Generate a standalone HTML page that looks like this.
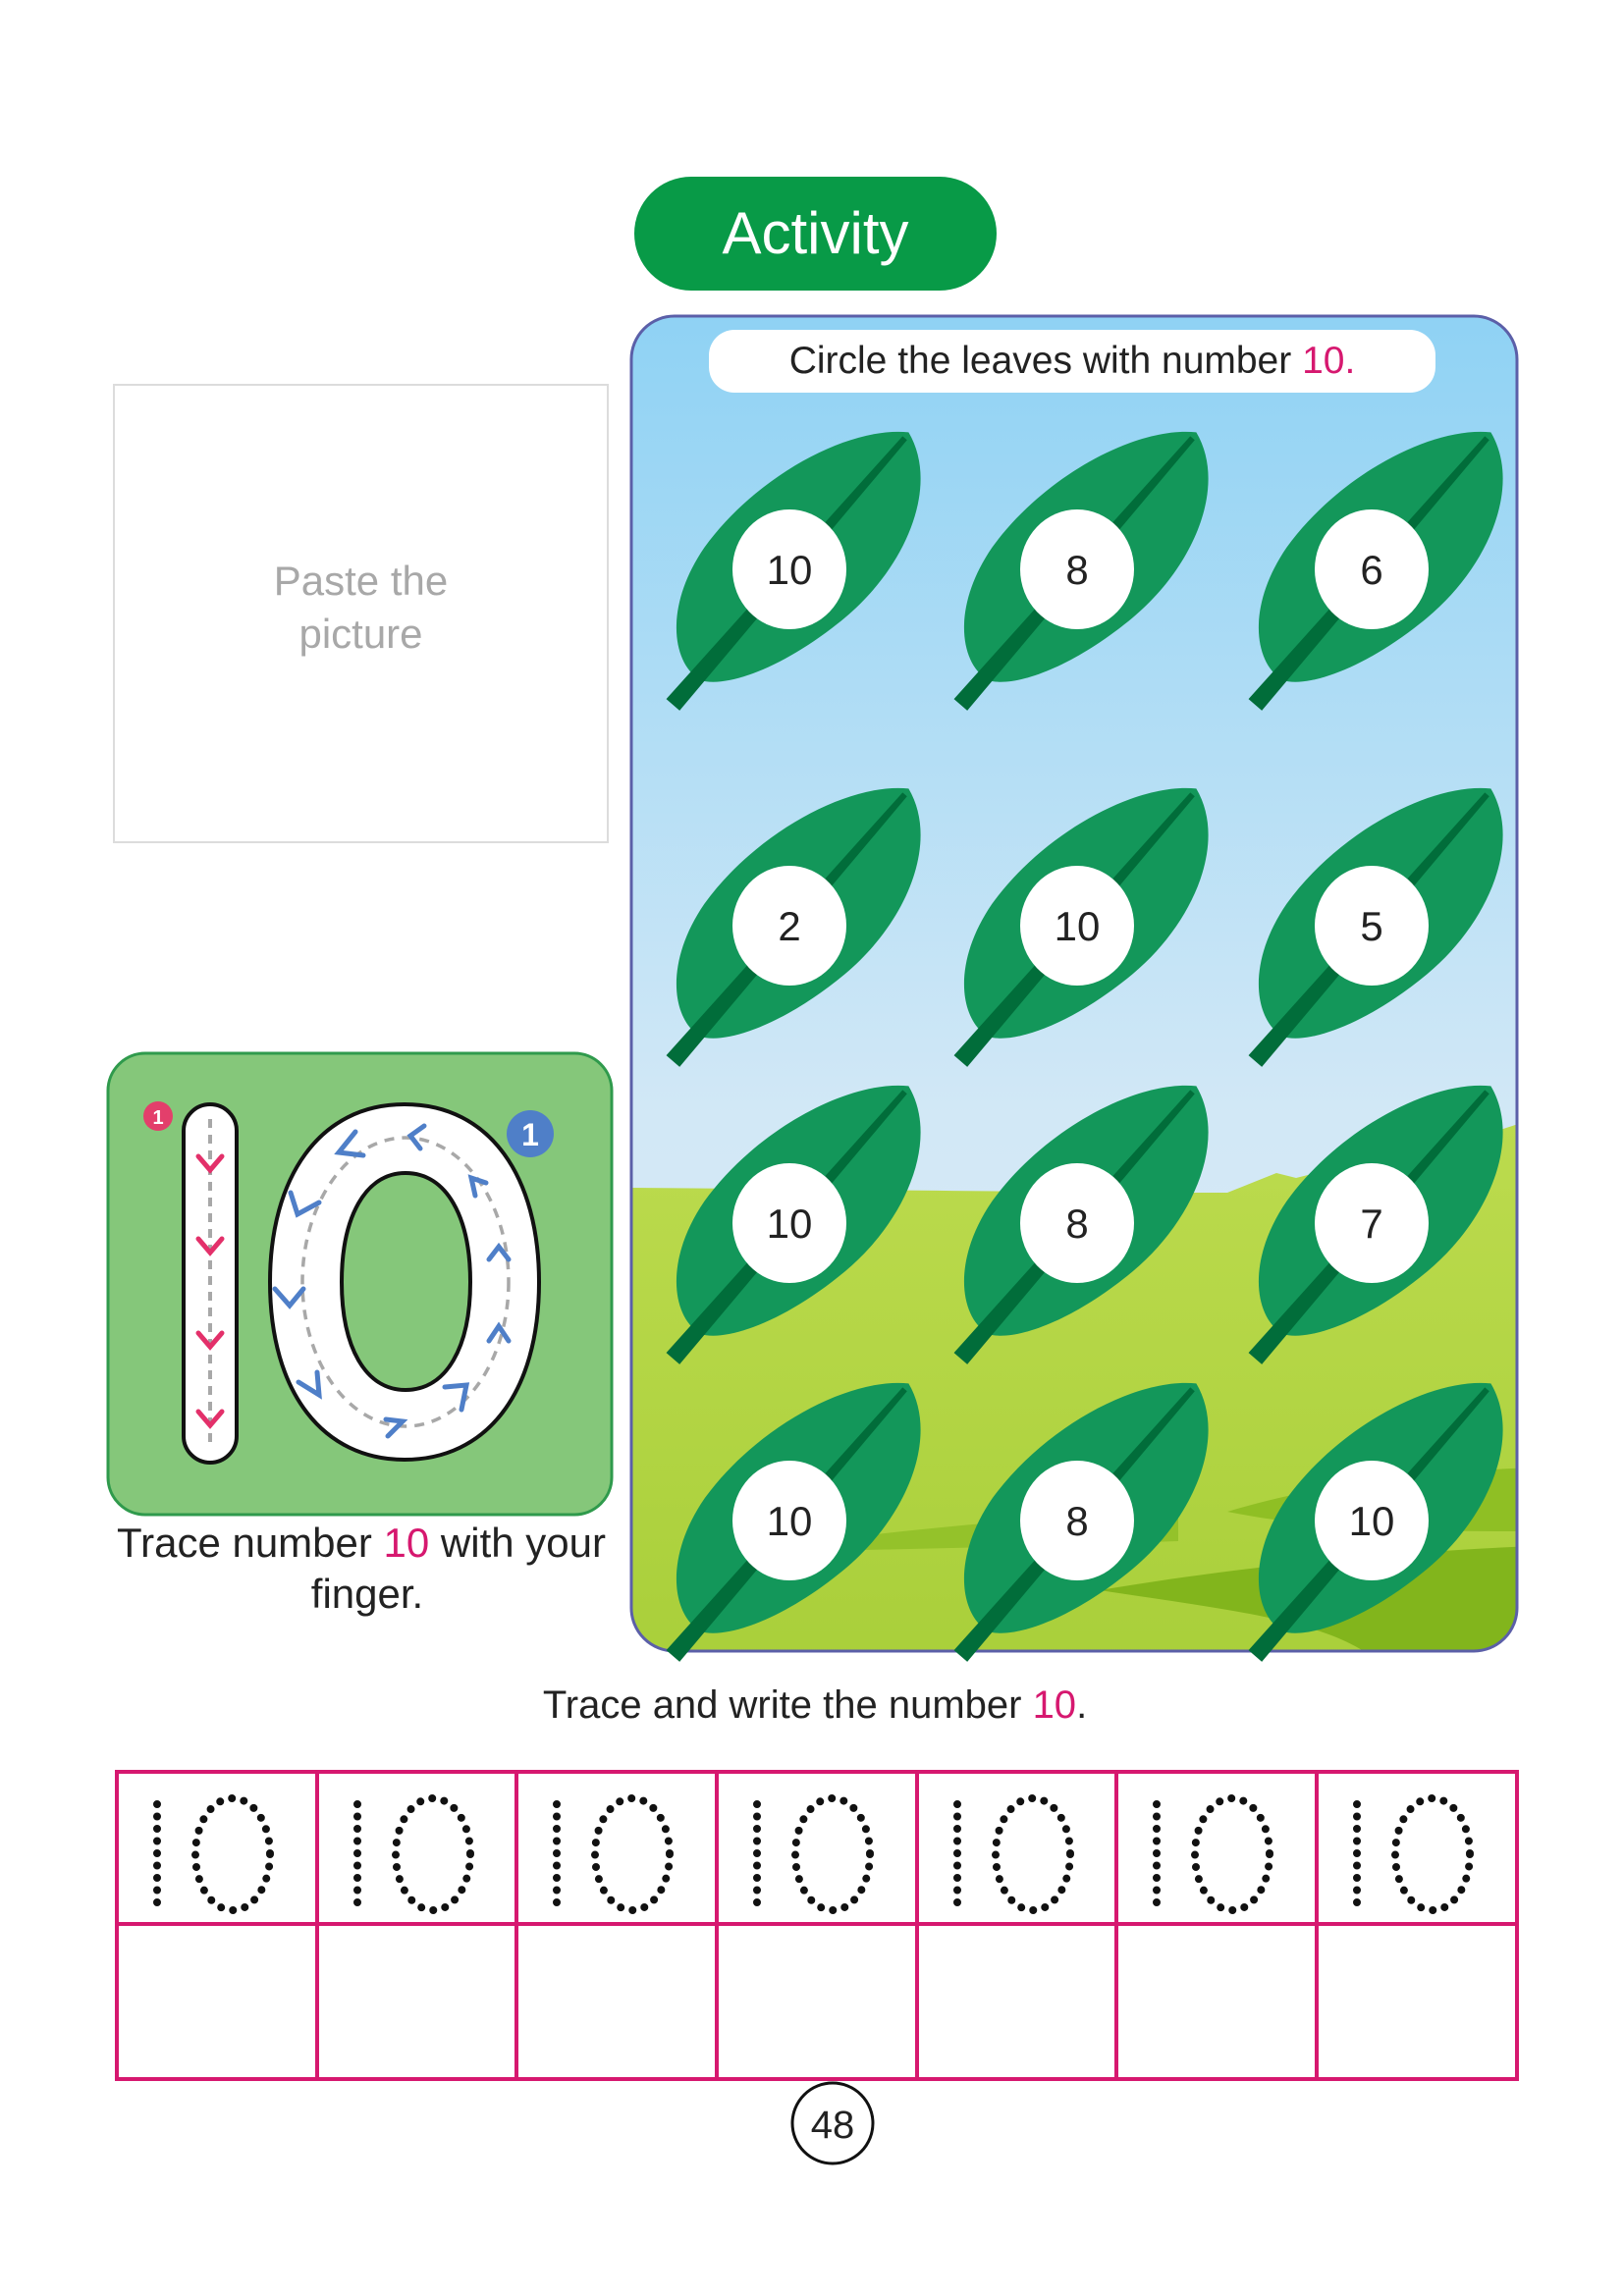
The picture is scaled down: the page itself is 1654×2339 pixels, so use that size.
<!DOCTYPE html>
<html><head><meta charset="utf-8"><style>
html,body{margin:0;padding:0;background:#fff;}
body{width:1654px;height:2339px;position:relative;overflow:hidden;font-family:"Liberation Sans",sans-serif;color:#222;}
.abs{position:absolute;}
</style></head><body>
<div class="abs" style="left:646px;top:180px;width:369px;height:116px;border-radius:58px;background:#089a47;color:#fff;font-size:60px;line-height:116px;text-align:center;">Activity</div>

<div class="abs" style="left:115px;top:391px;width:501px;height:464px;border:2px solid #dcdcdc;"></div>
<div class="abs" style="left:115px;top:565px;width:505px;text-align:center;color:#a8a8a8;font-size:42px;line-height:54px;">Paste the<br>picture</div>

<svg class="abs" style="left:0;top:0" width="1654" height="2339" viewBox="0 0 1654 2339">
<defs>
<linearGradient id="sky" x1="0" y1="0" x2="0" y2="1">
<stop offset="0" stop-color="#8fd2f4"/><stop offset="0.6" stop-color="#d2e8f6"/><stop offset="1" stop-color="#dcecf6"/>
</linearGradient>
<linearGradient id="grass" x1="0" y1="0" x2="0" y2="1">
<stop offset="0" stop-color="#bcdb4e"/><stop offset="1" stop-color="#a9cf3a"/>
</linearGradient>
<clipPath id="pc"><rect x="643" y="322" width="902" height="1360" rx="44"/></clipPath>
<g id="leaf">
<path d="M0,-185 C60,-165 88,-80 75,0 C62,80 30,135 5,145 C-30,150 -72,110 -80,40 C-88,-50 -50,-150 0,-185Z" fill="#13975a"/>
<path d="M-2,-178 L4,-178 L10,182 L-8,182Z" fill="#016d3a"/>
</g>
</defs>
<rect x="643" y="322" width="902" height="1360" rx="44" fill="url(#sky)"/>
<g clip-path="url(#pc)">
<path d="M640,1210 C900,1212 1100,1215 1250,1215 L1300,1195 L1320,1200 L1400,1180 C1470,1168 1520,1155 1560,1140 L1560,1700 L640,1700Z" fill="url(#grass)"/>
<path d="M1250,1540 C1350,1510 1450,1500 1560,1495 L1560,1560 C1450,1560 1350,1560 1250,1540Z" fill="#8fbf24"/>
<path d="M1120,1620 C1300,1590 1450,1580 1560,1575 L1560,1690 L1400,1690 C1350,1650 1250,1640 1120,1620Z" fill="#82b51c"/>
<path d="M760,1580 C900,1560 1050,1545 1200,1540 L1200,1570 C1050,1575 900,1580 760,1580Z" fill="#94c22a"/>
</g>
<rect x="643" y="322" width="902" height="1360" rx="44" fill="none" stroke="#5b5fa8" stroke-width="3"/>
<rect x="722" y="336" width="740" height="64" rx="26" fill="#fff"/>
<text x="1092" y="380" text-anchor="middle" font-family="Liberation Sans, sans-serif" font-size="39" fill="#222">Circle the leaves with number <tspan fill="#d6186f">10.</tspan></text>

<g font-family="Liberation Sans, sans-serif" font-size="42" text-anchor="middle" fill="#222">
<g transform="translate(804,580)"><use href="#leaf" transform="rotate(41)"/><ellipse rx="58" ry="61" fill="#fff"/><text y="15">10</text></g>
<g transform="translate(1097,580)"><use href="#leaf" transform="rotate(41)"/><ellipse rx="58" ry="61" fill="#fff"/><text y="15">8</text></g>
<g transform="translate(1397,580)"><use href="#leaf" transform="rotate(41)"/><ellipse rx="58" ry="61" fill="#fff"/><text y="15">6</text></g>
<g transform="translate(804,943)"><use href="#leaf" transform="rotate(41)"/><ellipse rx="58" ry="61" fill="#fff"/><text y="15">2</text></g>
<g transform="translate(1097,943)"><use href="#leaf" transform="rotate(41)"/><ellipse rx="58" ry="61" fill="#fff"/><text y="15">10</text></g>
<g transform="translate(1397,943)"><use href="#leaf" transform="rotate(41)"/><ellipse rx="58" ry="61" fill="#fff"/><text y="15">5</text></g>
<g transform="translate(804,1246)"><use href="#leaf" transform="rotate(41)"/><ellipse rx="58" ry="61" fill="#fff"/><text y="15">10</text></g>
<g transform="translate(1097,1246)"><use href="#leaf" transform="rotate(41)"/><ellipse rx="58" ry="61" fill="#fff"/><text y="15">8</text></g>
<g transform="translate(1397,1246)"><use href="#leaf" transform="rotate(41)"/><ellipse rx="58" ry="61" fill="#fff"/><text y="15">7</text></g>
<g transform="translate(804,1549)"><use href="#leaf" transform="rotate(41)"/><ellipse rx="58" ry="61" fill="#fff"/><text y="15">10</text></g>
<g transform="translate(1097,1549)"><use href="#leaf" transform="rotate(41)"/><ellipse rx="58" ry="61" fill="#fff"/><text y="15">8</text></g>
<g transform="translate(1397,1549)"><use href="#leaf" transform="rotate(41)"/><ellipse rx="58" ry="61" fill="#fff"/><text y="15">10</text></g>
</g>

<rect x="110" y="1073" width="513" height="470" rx="38" fill="#85c77a" stroke="#2f9a4c" stroke-width="3"/>
<rect x="187" y="1125" width="54" height="365" rx="27" fill="#fff" stroke="#111" stroke-width="4"/>
<line x1="214" y1="1140" x2="214" y2="1475" stroke="#a8a8a8" stroke-width="4" stroke-dasharray="9 7"/>
<g fill="none" stroke="#e3306a" stroke-width="5" stroke-linecap="round">
<path d="M202,1178 L214,1192 L226,1178"/><path d="M202,1262 L214,1276 L226,1262"/><path d="M202,1358 L214,1372 L226,1358"/><path d="M202,1438 L214,1452 L226,1438"/>
</g>
<path fill-rule="evenodd" d="M412,1125 C500,1125 549,1200 549,1306 C549,1420 495,1487 412,1487 C330,1487 275,1420 275,1306 C275,1200 325,1125 412,1125Z M413,1195 C455,1195 479,1240 479,1306 C479,1372 455,1416 413,1416 C372,1416 348,1372 348,1306 C348,1240 372,1195 413,1195Z" fill="#fff" stroke="#111" stroke-width="4"/>
<ellipse cx="413" cy="1306" rx="105" ry="147" fill="none" stroke="#a8a8a8" stroke-width="3.5" stroke-dasharray="10 8"/>
<g fill="none" stroke="#4f7fc8" stroke-width="5" stroke-linecap="round">
<path d="M432,1147 L418,1157 L428,1170"/><path d="M362,1153 L345,1174 L370,1177"/><path d="M296,1215 L303,1237 L325,1225"/>
<path d="M280,1313 L295,1330 L309,1313"/><path d="M304,1408 L325,1421 L323,1398"/><path d="M393,1446 L410,1448 L395,1463"/>
<path d="M453,1413 L475,1411 L470,1436"/><path d="M495,1205 L480,1200 L484,1218"/><path d="M498,1283 L508,1270 L518,1283"/><path d="M498,1366 L508,1351 L518,1366"/>
</g>
<circle cx="161" cy="1137" r="15" fill="#e33f6b"/>
<text x="161" y="1145" text-anchor="middle" font-family="Liberation Sans, sans-serif" font-weight="bold" font-size="20" fill="#fff">1</text>
<circle cx="540" cy="1155" r="24" fill="#4f7fc8"/>
<text x="540" y="1167" text-anchor="middle" font-family="Liberation Sans, sans-serif" font-weight="bold" font-size="32" fill="#fff">1</text>

<text x="368" y="1586" text-anchor="middle" font-family="Liberation Sans, sans-serif" font-size="42" fill="#222">Trace number <tspan fill="#d6186f">10</tspan> with your</text>
<text x="374" y="1638" text-anchor="middle" font-family="Liberation Sans, sans-serif" font-size="42" fill="#222">finger.</text>
<text x="830" y="1750" text-anchor="middle" font-family="Liberation Sans, sans-serif" font-size="40" fill="#222">Trace and write the number <tspan fill="#d6186f">10</tspan>.</text>

<g fill="none" stroke="#d6186f" stroke-width="4">
<rect x="119" y="1805" width="1426" height="313"/>
<line x1="119" y1="1960" x2="1545" y2="1960"/>
<line x1="323" y1="1805" x2="323" y2="2118"/><line x1="526" y1="1805" x2="526" y2="2118"/><line x1="730" y1="1805" x2="730" y2="2118"/>
<line x1="934" y1="1805" x2="934" y2="2118"/><line x1="1137" y1="1805" x2="1137" y2="2118"/><line x1="1341" y1="1805" x2="1341" y2="2118"/>
</g>
<g id="d10" fill="none" stroke="#111" stroke-width="8" stroke-linecap="round" stroke-dasharray="0 12.5">
<line x1="160" y1="1838" x2="160" y2="1945"/>
<ellipse cx="237" cy="1889" rx="38" ry="57"/>
</g>
<use href="#d10" x="204"/><use href="#d10" x="407"/><use href="#d10" x="611"/><use href="#d10" x="815"/><use href="#d10" x="1018"/><use href="#d10" x="1222"/>

<circle cx="848" cy="2163" r="41" fill="#fff" stroke="#111" stroke-width="3"/>
<text x="848" y="2178" text-anchor="middle" font-family="Liberation Sans, sans-serif" font-size="40" fill="#222">48</text>
</svg>
</body></html>
